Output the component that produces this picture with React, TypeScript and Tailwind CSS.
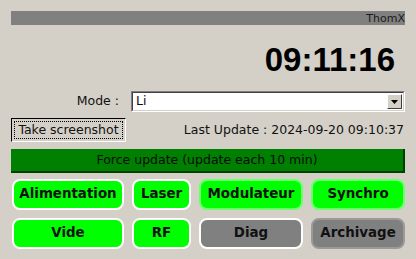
const BUTTONS = [
  { label: 'Alimentation', tone: 'on',  ring: 'white' },
  { label: 'Laser',        tone: 'on',  ring: 'white' },
  { label: 'Modulateur',   tone: 'on',  ring: 'soft' },
  { label: 'Synchro',      tone: 'on',  ring: 'soft' },
  { label: 'Vide',         tone: 'on',  ring: 'white' },
  { label: 'RF',           tone: 'on',  ring: 'white' },
  { label: 'Diag',         tone: 'off', ring: 'white' },
  { label: 'Archivage',    tone: 'off', ring: 'soft' },
]

function ringClass(tone: string, ring: string) {
  if (ring === 'white') return 'border-white'
  return tone === 'on' ? 'border-[#6cff6c]' : 'border-[#9a9a9a]'
}

export default function App() {
  return (
    <div className="w-[416px] h-[259px] bg-[#d4d0c8] px-[11px] pt-[11px] font-['DejaVu_Sans',sans-serif] text-[#111] overflow-hidden">
      {/* ── Title strip ───────────────────────────── */}
      <div className="h-[14px] bg-[#808080] flex items-center justify-end">
        <span className="text-[11px] leading-none text-[#1a1a1a]">ThomX</span>
      </div>

      {/* ── Clock ─────────────────────────────────── */}
      <div className="mt-[18px] flex justify-end pr-[10px]">
        <span className="font-['Liberation_Sans',sans-serif] font-bold text-[33px] leading-none text-black">09:11:16</span>
      </div>

      {/* ── Mode ──────────────────────────────────── */}
      <div className="mt-[15px] flex items-center justify-end gap-[12px]">
        <span className="text-[12.5px]">Mode :</span>
        <div className="w-[274px] h-[21px] bg-white border border-t-[#808080] border-l-[#808080] border-b-white border-r-white flex items-center">
          <div className="flex-1 h-full border border-t-[#404040] border-l-[#404040] border-b-[#d4d0c8] border-r-[#d4d0c8] flex items-center justify-between">
            <span className="text-[12.5px] pl-[3px] text-[#200020]">Li</span>
            <div className="w-[15px] h-[15px] mr-[1px] bg-[#d4d0c8] border border-t-white border-l-white border-b-[#404040] border-r-[#404040] flex items-center justify-center">
              <svg width="7" height="4" viewBox="0 0 7 4"><path d="M0 0h7L3.5 4z" fill="#000" /></svg>
            </div>
          </div>
        </div>
      </div>

      {/* ── Screenshot / last update ──────────────── */}
      <div className="mt-[6px] flex items-center justify-between">
        <button className="w-[115px] h-[24px] border border-t-black border-l-black border-b-white border-r-white bg-[#d4d0c8] p-[2px]">
          <div className="h-full border border-dotted border-black flex items-center justify-center text-[12.5px] leading-none">
            Take screenshot
          </div>
        </button>
        <span className="text-[12.5px] pr-[1px]">Last Update : 2024-09-20 09:10:37</span>
      </div>

      {/* ── Force update ──────────────────────────── */}
      <div className="mt-[7px] h-[24px] bg-[#008000] border-b-2 border-r-2 border-[#004000] flex items-center justify-center text-[12.5px] text-[#0a0a0a]">
        Force update (update each 10 min)
      </div>

      {/* ── Subsystem buttons ─────────────────────── */}
      <div className="mt-[6px] ml-[1px] grid grid-cols-[112px_59px_104px_94px] gap-[8px]">
        {BUTTONS.map(b => (
          <div
            key={b.label}
            className={`h-[31px] rounded-[8px] border-2 flex items-center justify-center font-bold text-[13.4px] ${ringClass(b.tone, b.ring)} ${b.tone === 'on' ? 'bg-[#00ff00]' : 'bg-[#808080]'}`}
          >
            {b.label}
          </div>
        ))}
      </div>
    </div>
  )
}
